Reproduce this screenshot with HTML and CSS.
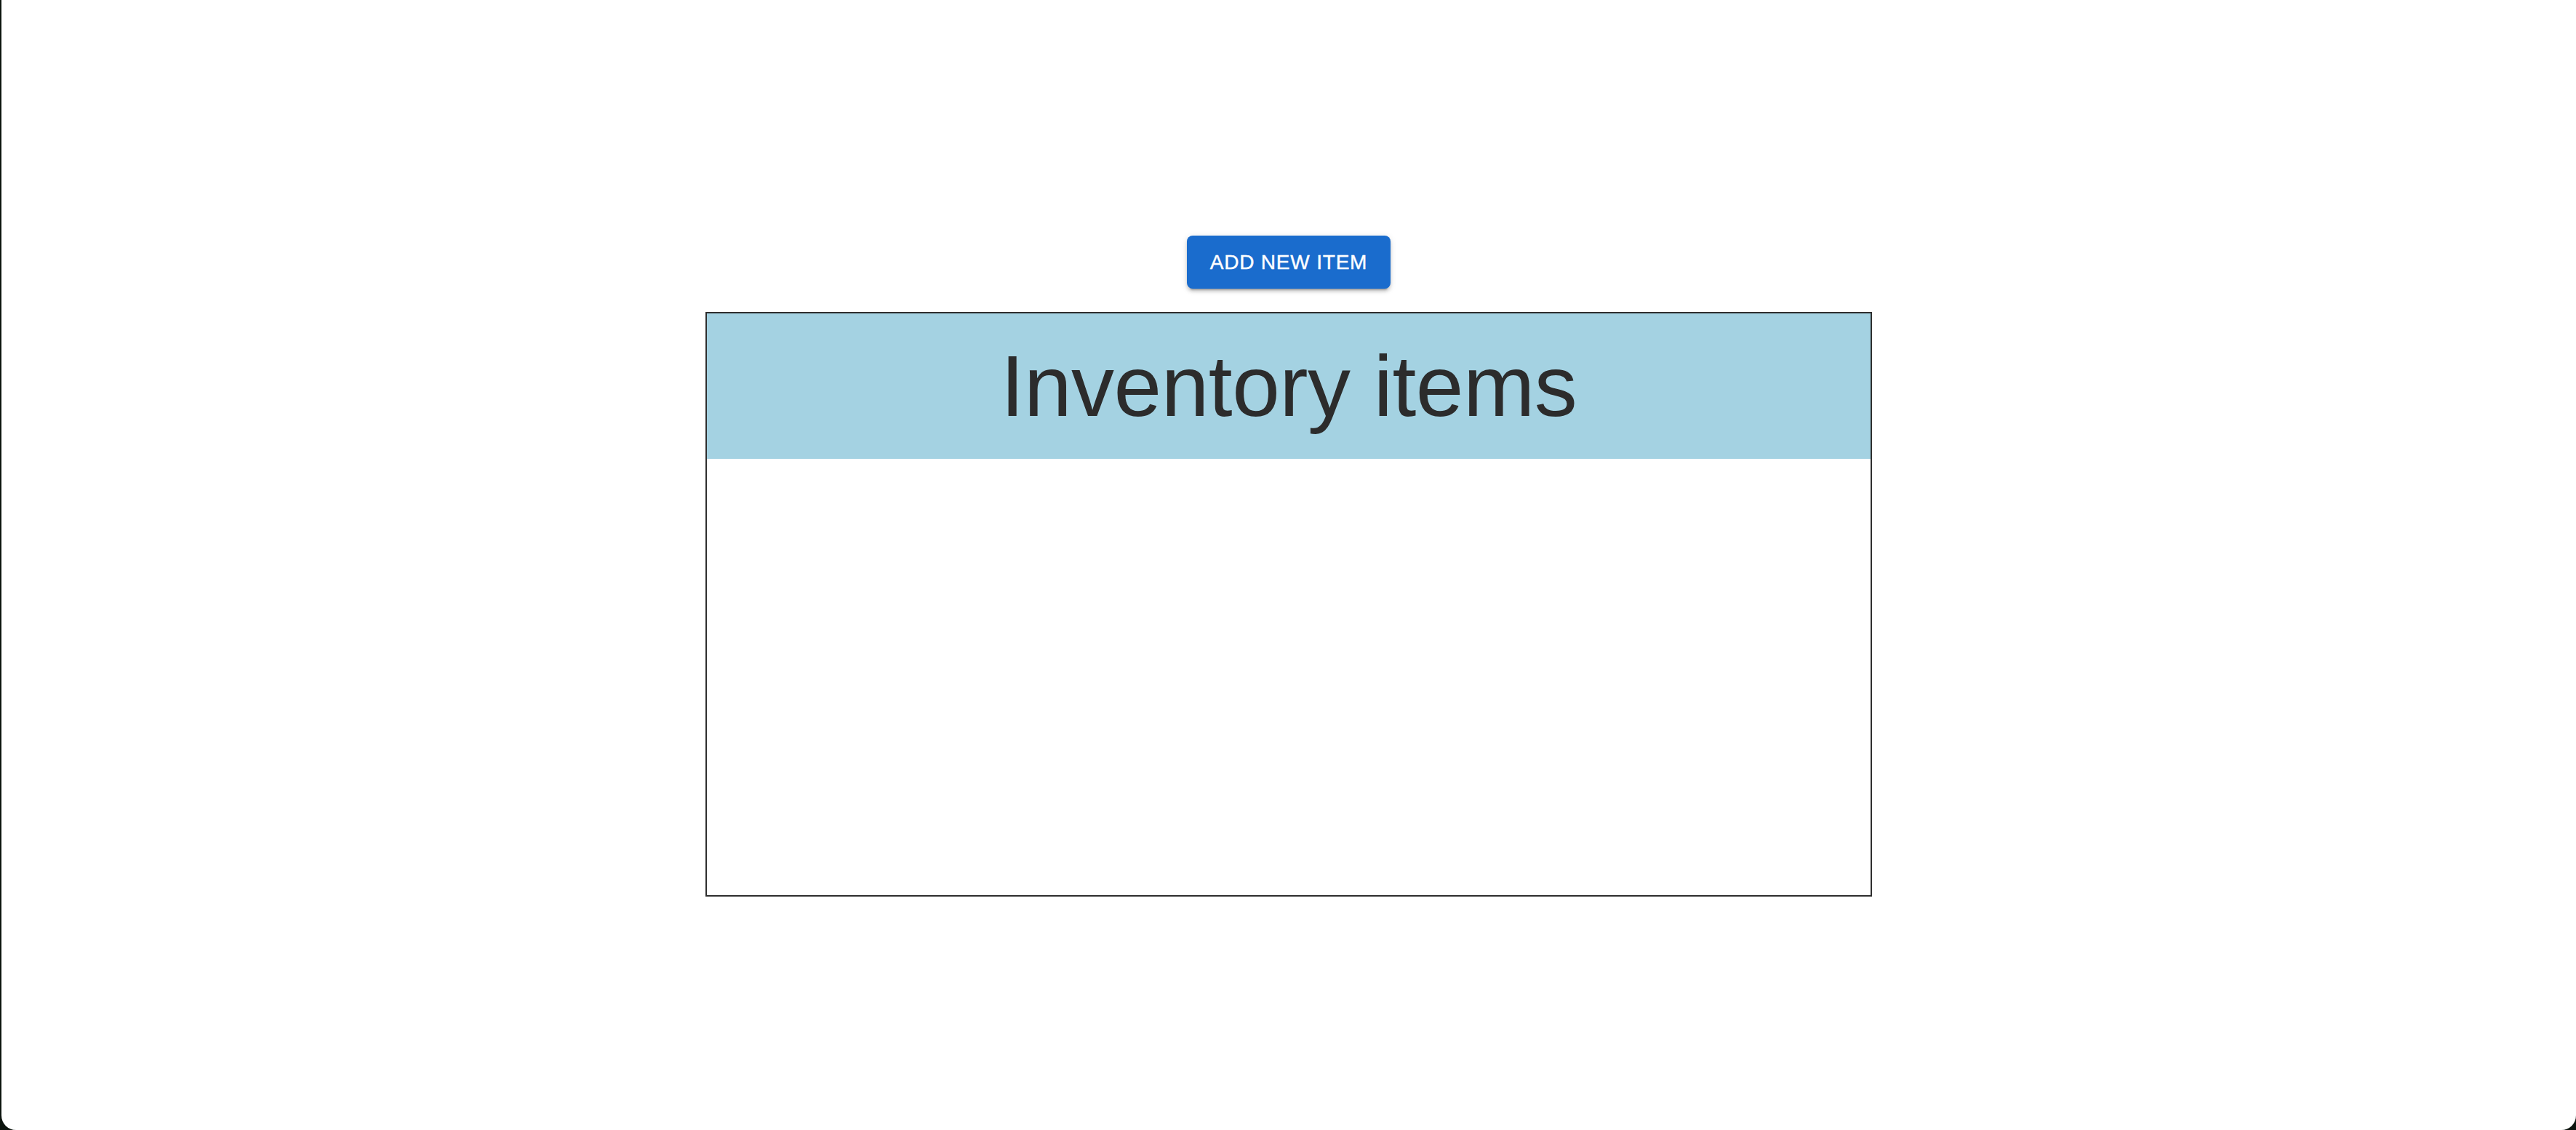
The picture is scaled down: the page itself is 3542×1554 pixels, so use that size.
FILE: index.html
```html
<!DOCTYPE html>
<html lang="en">
<head>
<meta charset="utf-8">
<title>Inventory</title>
<link rel="stylesheet" href="styles.css">
</head>
<body>
<main class="page">
  <button class="add-btn" type="button">ADD NEW ITEM</button>
  <section class="inventory">
    <header class="inventory-head">
      <h2 class="inventory-title">Inventory items</h2>
    </header>
    <div class="inventory-body"></div>
  </section>
</main>
</body>
</html>
```

FILE: styles.css
```css
html {
  margin: 0;
  padding: 0;
  background: #0c140e;
  height: 1554px;
  overflow: hidden;
}

body {
  margin: 0 0 0 2px;
  height: 1554px;
  background: #ffffff;
  border-radius: 0 0 20px 20px;
  font-family: "Liberation Sans", Arial, sans-serif;
  overflow: hidden;
}

.page {
  display: flex;
  flex-direction: column;
  align-items: center;
  padding-top: 324px;
  gap: 32px;
}

.add-btn {
  box-sizing: border-box;
  width: 280px;
  height: 73px;
  padding: 0;
  border: none;
  border-radius: 8px;
  background: #1a6ccd;
  color: #ffffff;
  font-family: "Liberation Sans", Arial, sans-serif;
  font-size: 28px;
  font-weight: 400;
  letter-spacing: 0.8px;
  line-height: 73px;
  white-space: nowrap;
  text-align: center;
  -webkit-text-stroke: 0.4px #ffffff;
  box-shadow: 0 6px 2px -4px rgba(0,0,0,0.2), 0 4px 4px 0 rgba(0,0,0,0.14), 0 2px 10px 0 rgba(0,0,0,0.12);
  cursor: pointer;
}

.inventory {
  box-sizing: border-box;
  width: 1604px;
  height: 804px;
  border: 2px solid #2e2e2e;
  display: flex;
  flex-direction: column;
  background: #ffffff;
}

.inventory-head {
  height: 200px;
  background: #a4d2e2;
  display: flex;
  justify-content: center;
}

.inventory-title {
  margin: 0;
  font-family: "Liberation Sans", Arial, sans-serif;
  font-weight: 400;
  font-size: 118px;
  line-height: 200px;
  color: #2c2c2c;
  letter-spacing: -0.5px;
}

.inventory-body {
  flex: 1;
}
```
